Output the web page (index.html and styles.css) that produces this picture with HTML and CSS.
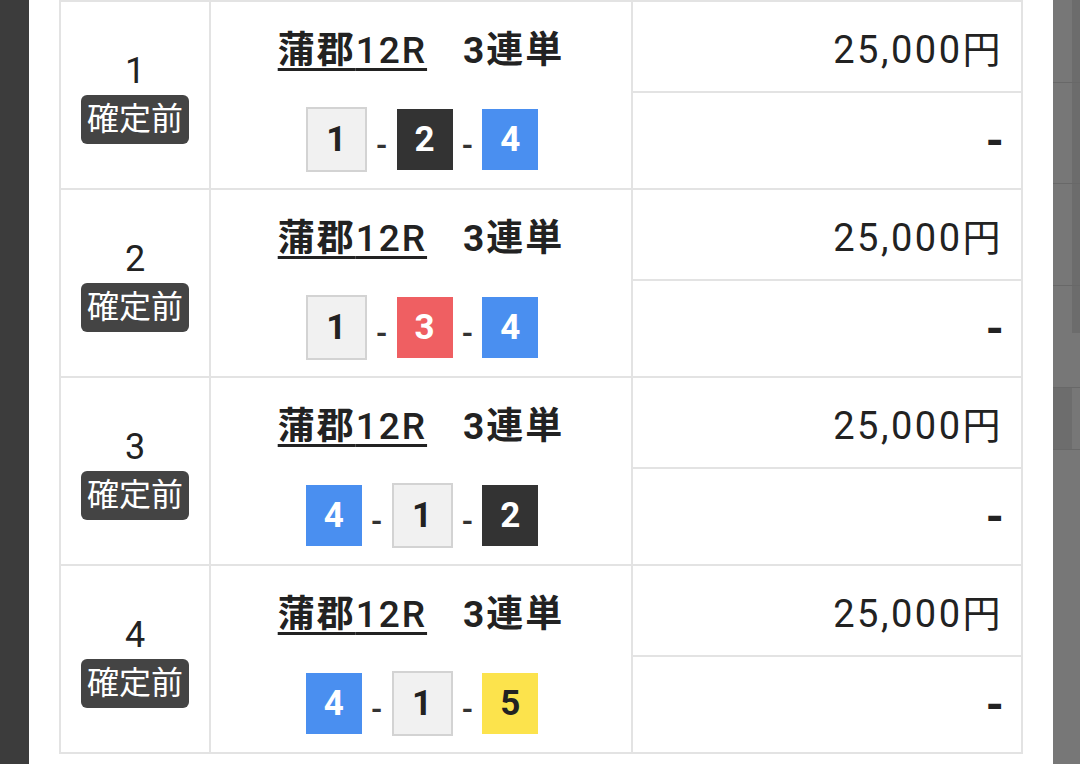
FILE: index.html
```html
<!DOCTYPE html>
<html lang="ja">
<head>
  <meta charset="UTF-8">
  <meta name="viewport" content="width=device-width, initial-scale=1.0">
  <title>購入履歴</title>
  <link rel="stylesheet" href="styles.css">
</head>
<body>
  <div class="screen">
    <div class="shade-left"></div>

    <div class="sheet">
      <table class="bets">
        <tr>
          <td class="no" rowspan="2">
            <div class="num">1</div>
            <span class="status">確定前</span>
          </td>
          <td class="race" rowspan="2">
            <div class="title"><a href="#">蒲郡<span class="thin">12R</span></a><span class="kind">3連単</span></div>
            <div class="combo">
              <span class="boat b1">1</span><span class="dash">-</span><span class="boat b2">2</span><span class="dash">-</span><span class="boat b4">4</span>
            </div>
          </td>
          <td class="amount">25,000円</td>
        </tr>
        <tr><td class="payout">-</td></tr>

        <tr>
          <td class="no" rowspan="2">
            <div class="num">2</div>
            <span class="status">確定前</span>
          </td>
          <td class="race" rowspan="2">
            <div class="title"><a href="#">蒲郡<span class="thin">12R</span></a><span class="kind">3連単</span></div>
            <div class="combo">
              <span class="boat b1">1</span><span class="dash">-</span><span class="boat b3">3</span><span class="dash">-</span><span class="boat b4">4</span>
            </div>
          </td>
          <td class="amount">25,000円</td>
        </tr>
        <tr><td class="payout">-</td></tr>

        <tr>
          <td class="no" rowspan="2">
            <div class="num">3</div>
            <span class="status">確定前</span>
          </td>
          <td class="race" rowspan="2">
            <div class="title"><a href="#">蒲郡<span class="thin">12R</span></a><span class="kind">3連単</span></div>
            <div class="combo">
              <span class="boat b4">4</span><span class="dash">-</span><span class="boat b1">1</span><span class="dash">-</span><span class="boat b2">2</span>
            </div>
          </td>
          <td class="amount">25,000円</td>
        </tr>
        <tr><td class="payout">-</td></tr>

        <tr>
          <td class="no" rowspan="2">
            <div class="num">4</div>
            <span class="status">確定前</span>
          </td>
          <td class="race" rowspan="2">
            <div class="title"><a href="#">蒲郡<span class="thin">12R</span></a><span class="kind">3連単</span></div>
            <div class="combo">
              <span class="boat b4">4</span><span class="dash">-</span><span class="boat b1">1</span><span class="dash">-</span><span class="boat b5">5</span>
            </div>
          </td>
          <td class="amount">25,000円</td>
        </tr>
        <tr><td class="payout">-</td></tr>
      </table>
    </div>

    <!-- page behind the dialog, dimmed -->
    <div class="shade-right">
      <div class="bg-row h83 side"></div>
      <div class="bg-row h101 side"></div>
      <div class="bg-row h102 side"></div>
      <div class="bg-row h47 side flat"></div>
      <div class="bg-row h55"></div>
      <div class="bg-row h62 lead"></div>
      <div class="bg-row rest"></div>
    </div>
  </div>
</body>
</html>
```

FILE: styles.css
```css
html, body {
  margin: 0;
  padding: 0;
}

body {
  font-family: Roboto, "Noto Sans CJK JP", sans-serif;
  color: #222;
  background-color: #3c3c3c;
}

.screen {
  display: flex;
  height: 764px;
  overflow: hidden;
}

.shade-left {
  width: 29px;
  background-color: #3c3c3c;
}

.sheet {
  width: 1024px;
  background-color: #fff;
  padding: 0 30px;
  box-sizing: border-box;
}

/* bets table */
.bets {
  width: 964px;
  border-collapse: collapse;
  table-layout: fixed;
}

.bets td {
  border: 2px solid #e3e3e3;
  padding: 0;
}

.no {
  width: 148px;
  text-align: center;
  vertical-align: middle;
}

.num {
  font-size: 36px;
  line-height: 48px;
  padding-top: 1px;
}

.status {
  display: inline-block;
  background-color: #444;
  color: #fff;
  font-size: 32px;
  line-height: 49px;
  padding: 0 6px;
  border-radius: 6px;
}

.race {
  width: 420px;
  text-align: center;
  vertical-align: top;
}

.title {
  font-size: 37px;
  font-weight: bold;
  line-height: 50px;
  letter-spacing: 2px;
  margin-top: 24px;
}

.title a {
  color: #222;
  text-decoration: underline;
  text-decoration-thickness: 3px;
  text-underline-offset: 5px;
}

.title .thin {
  font-weight: 500;
}

.kind {
  margin-left: 36px;
}

.combo {
  display: flex;
  justify-content: center;
  align-items: center;
  gap: 9px;
  margin-top: 31px;
  padding-left: 2px;
}

.boat {
  display: flex;
  align-items: center;
  justify-content: center;
  width: 56px;
  height: 61px;
  font-size: 35px;
  font-weight: bold;
  color: #fff;
}

.b1 {
  width: 57px;
  background-color: #f1f1f1;
  border: 2px solid #d3d3d3;
  color: #222;
}

.b2 { background-color: #333; }
.b3 { background-color: #ef5f62; }
.b4 { background-color: #4a8ff0; }
.b5 { background-color: #fce34c; color: #222; }

.dash {
  font-size: 30px;
  font-weight: bold;
  color: #333;
  padding-top: 10px;
}

.amount {
  height: 89px;
  text-align: right;
  padding-right: 18px !important;
  font-size: 38px;
  letter-spacing: 2.5px;
  vertical-align: middle;
}

.payout {
  height: 95px;
  text-align: right;
  padding-right: 17px !important;
  font-size: 46px;
  font-weight: bold;
  vertical-align: middle;
}

/* dimmed page on the right */
.shade-right {
  flex: 1;
  display: flex;
  flex-direction: column;
  background-color: #777;
}

.bg-row {
  border-bottom: 1px solid #686868;
  background-color: #777;
}

.bg-row.side {
  background: linear-gradient(to right, #777 19px, #6c6c6c 19px);
}

.bg-row.flat {
  border-bottom: none;
}

.bg-row.lead {
  background: linear-gradient(to right, #6d6d6d 19px, #777 19px);
}

.h83 { height: 82px; }
.h101 { height: 100px; }
.h102 { height: 101px; }
.h47 { height: 47px; }
.h55 { height: 54px; }
.h62 { height: 61px; }
.rest { flex: 1; border-bottom: none; }
```
